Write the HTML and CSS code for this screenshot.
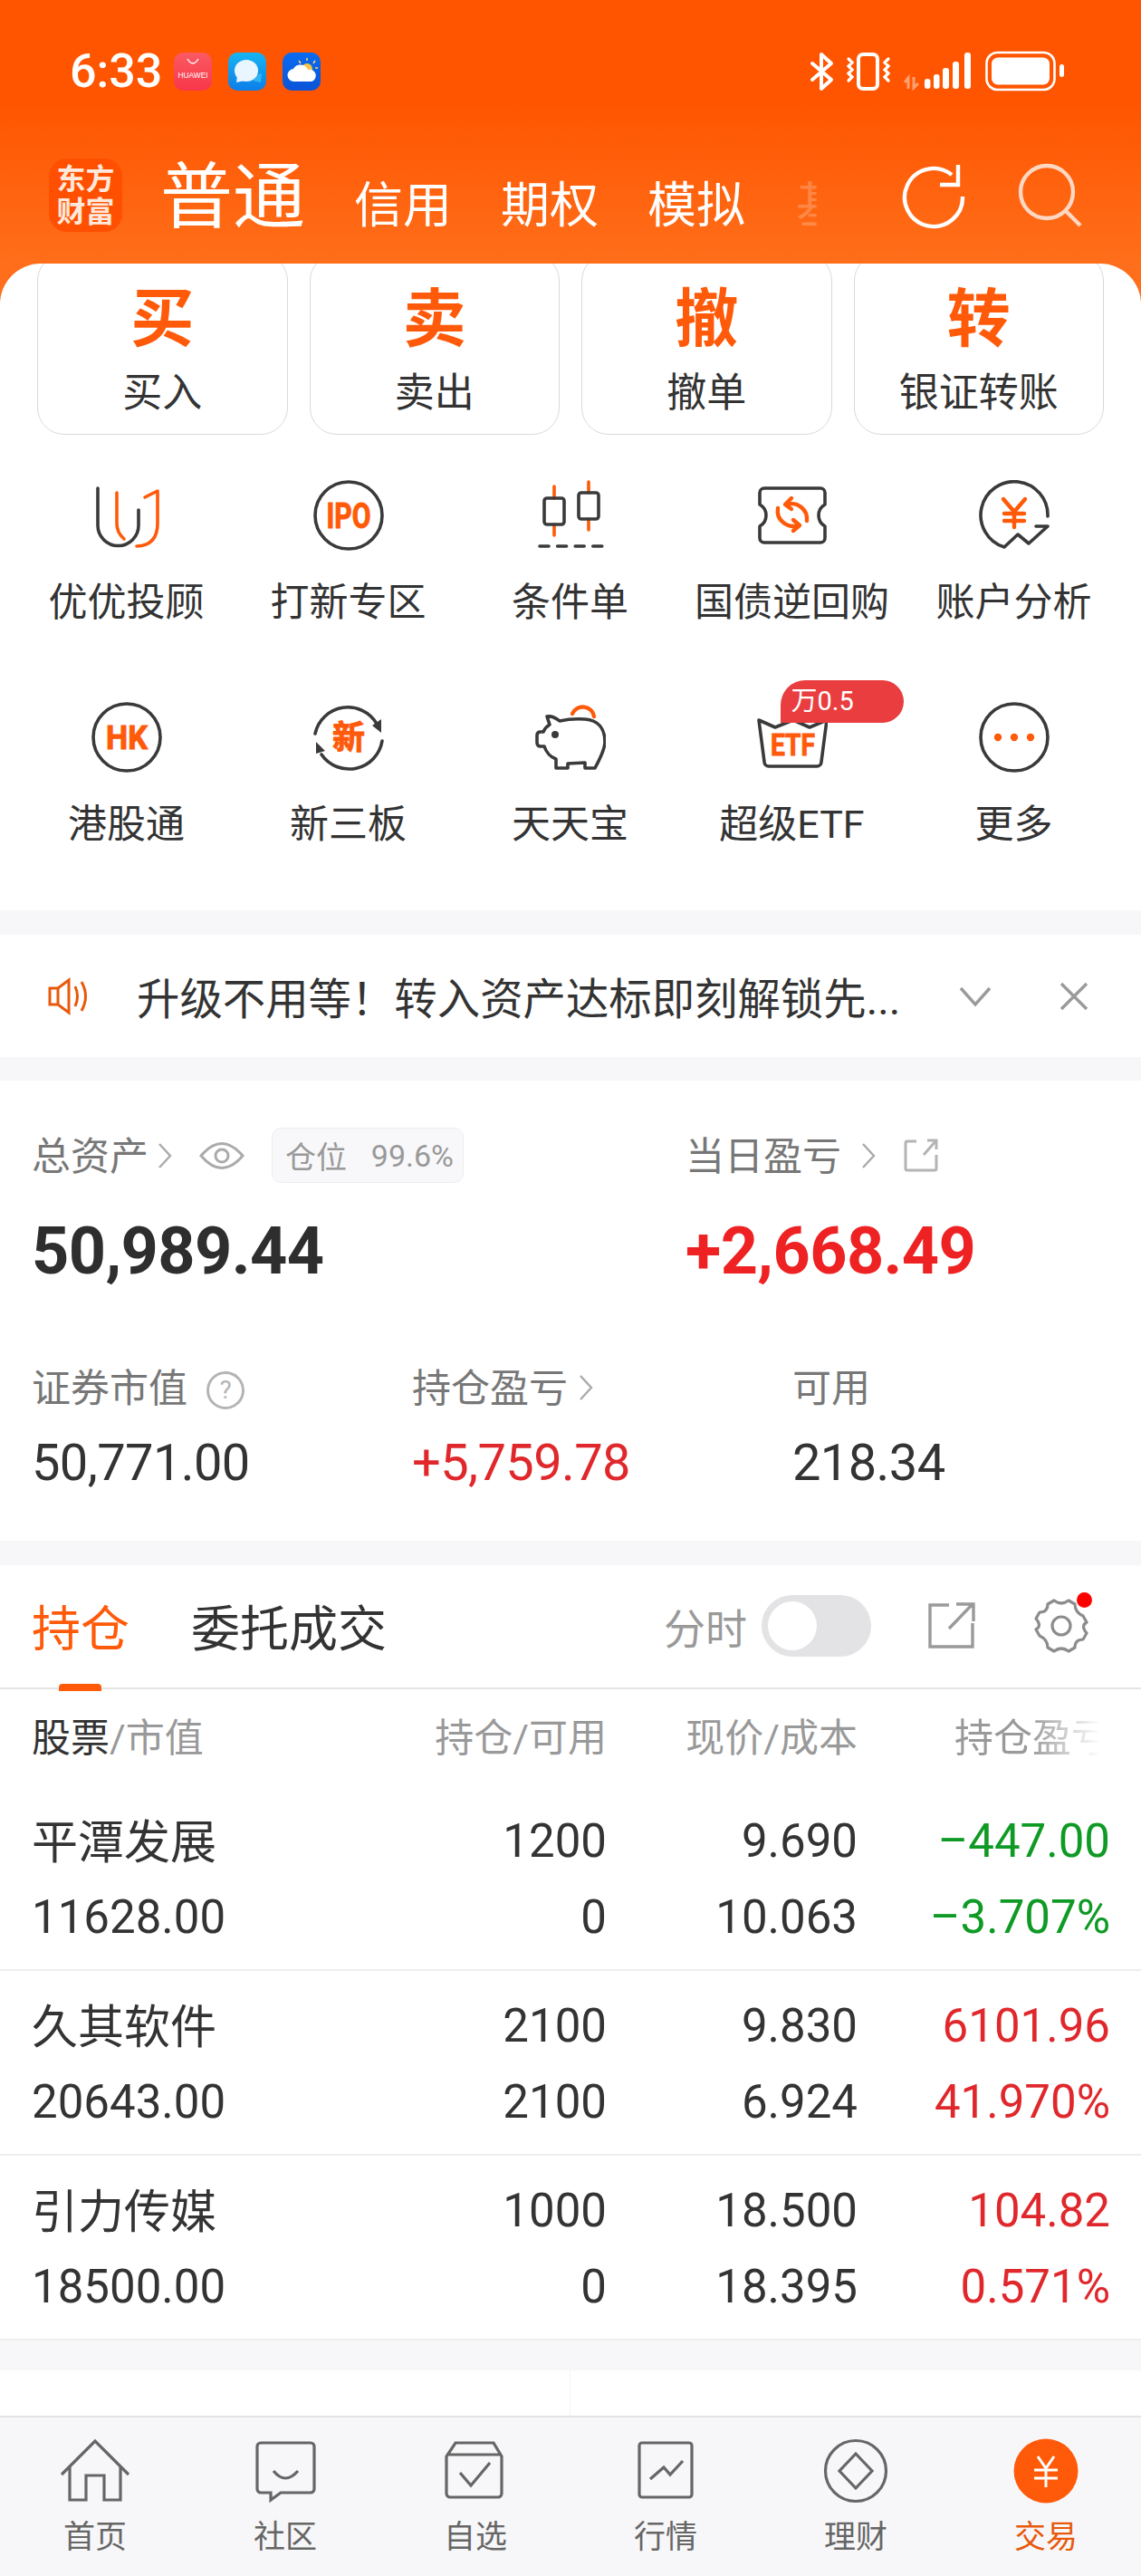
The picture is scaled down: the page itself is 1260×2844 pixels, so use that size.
FILE: index.html
```html
<!DOCTYPE html>
<html lang="zh-CN">
<head>
  <meta charset="UTF-8">
  <meta name="viewport" content="width=device-width, initial-scale=1.0">
  <title>交易</title>
  <link rel="stylesheet" href="styles.css">
</head>
<body>

<!-- Orange header with status bar -->
<header class="header">
  <div class="status-bar">
    <span class="clock">6:33</span>
    <div class="app-icon app-huawei">
      <svg width="42" height="42" viewBox="0 0 42 42"><path d="M15 7 Q21 17 27 7" fill="none" stroke="#fff" stroke-width="1.4"/><text x="21" y="28" text-anchor="middle" class="huawei-text" textLength="33" lengthAdjust="spacingAndGlyphs">HUAWEI</text></svg>
    </div>
    <div class="app-icon app-msg">
      <svg width="42" height="42" viewBox="0 0 42 42"><path d="M30 25 L37 23 L36 33 L27 31Z" fill="#2fb4f0"/><ellipse cx="20" cy="20" rx="13" ry="12" fill="#e9f6ff"/><path d="M10 26 L9 33 L18 31Z" fill="#e9f6ff"/></svg>
    </div>
    <div class="app-icon app-weather">
      <svg width="42" height="42" viewBox="0 0 42 42"><path d="M27 6 V9 M18 9 L20 12 M36 9 L34 12 M39 17 L36 17" stroke="#ffd76a" stroke-width="1.5"/><circle cx="27" cy="18" r="6" fill="#f6c445"/><path d="M13 32 a7 7 0 0 1 -1 -14 a9 9 0 0 1 16 1 a6.5 6.5 0 0 1 4 13Z" fill="#fff"/></svg>
    </div>
    <div class="status-right">
      <svg width="28" height="44" viewBox="0 0 28 44" class="ico-bt"><path d="M3 13 L24 31 L13 41 V3 L24 13 L3 31" fill="none" stroke="#fff" stroke-width="4" stroke-linejoin="round" stroke-linecap="round"/></svg>
      <svg width="50" height="44" viewBox="0 0 50 44"><rect x="14" y="3" width="21" height="38" rx="5" fill="none" stroke="#fff" stroke-width="4"/><path d="M3 8 L7 12 L3 16 L7 20 L3 24 L7 28 L3 32 M47 8 L43 12 L47 16 L43 20 L47 24 L43 28 L47 32" fill="none" stroke="#fff" stroke-width="3.2" stroke-linecap="round"/></svg>
      <svg width="76" height="44" viewBox="0 0 76 44" class="ico-signal">
        <path d="M5 41 V29 L1 34 M11 28 V40 L16 35" fill="none" stroke="#ffa070" stroke-width="3"/>
        <rect x="23" y="30" width="6.5" height="11" rx="3" fill="#fff"/>
        <rect x="33" y="25" width="6.5" height="16" rx="3" fill="#fff"/>
        <rect x="43" y="18" width="7" height="23" rx="3" fill="#fff"/>
        <rect x="54" y="11" width="7" height="30" rx="3" fill="#fff"/>
        <rect x="67" y="1" width="7" height="40" rx="3" fill="#fff"/>
      </svg>
      <svg width="88" height="46" viewBox="0 0 88 46" class="ico-battery">
        <rect x="1.5" y="2" width="75" height="41" rx="12" fill="none" stroke="#fff" stroke-width="2.6"/>
        <rect x="7" y="7.5" width="64" height="30" rx="7" fill="#fff"/>
        <rect x="82" y="15" width="5" height="14" rx="2.5" fill="#fff"/>
      </svg>
    </div>
  </div>

  <nav class="nav">
    <div class="logo"><span>东方</span><span>财富</span></div>
    <span class="nav-main">普通</span>
    <span class="nav-tab">信用</span>
    <span class="nav-tab">期权</span>
    <span class="nav-tab">模拟</span>
    <span class="nav-tab nav-fade">基金</span>
    <svg class="nav-refresh" width="72" height="72" viewBox="0 0 72 72"><path d="M69 36 A32 32 0 1 1 57 12" fill="none" stroke="#fff" stroke-width="4.4"/><path d="M64 1 V23 H44" fill="none" stroke="#fff" stroke-width="4.4"/></svg>
    <svg class="nav-search" width="72" height="72" viewBox="0 0 72 72"><circle cx="32" cy="32" r="29" fill="none" stroke="#ffd8c4" stroke-width="4.4"/><path d="M53 53 L69 69" stroke="#ffd8c4" stroke-width="4.4"/></svg>
  </nav>
</header>

<main class="card">
  <div class="actions">
    <div class="action"><b>买</b><span>买入</span></div>
    <div class="action"><b>卖</b><span>卖出</span></div>
    <div class="action"><b>撤</b><span>撤单</span></div>
    <div class="action"><b>转</b><span>银证转账</span></div>
  </div>

  <div class="shortcuts">
    <div class="shortcut">
      <svg class="ic" width="78" height="78" viewBox="0 0 78 78"><path d="M7 9 V50 a22.5 22.5 0 0 0 45 0 V33" class="dk"/><path d="M28 14 V48 Q28 58 36 65 M50 73 Q73 72 73 48 V12 L59 19" class="or"/></svg>
      <span>优优投顾</span>
    </div>
    <div class="shortcut">
      <svg class="ic" width="78" height="78" viewBox="0 0 78 78"><circle cx="39" cy="39" r="37" class="dk"/><text x="39" y="53" text-anchor="middle" class="ic-text" font-size="38" textLength="49" lengthAdjust="spacingAndGlyphs">IPO</text></svg>
      <span>打新专区</span>
    </div>
    <div class="shortcut">
      <svg class="ic" width="78" height="78" viewBox="0 0 78 78"><path d="M21 7 V20 M21 49 V61 M59 2 V14 M59 43 V55" class="or"/><rect x="10" y="20" width="22" height="29" rx="3" class="dk"/><rect x="48" y="14" width="22" height="29" rx="3" class="dk"/><path d="M5 73 H74" class="dk" stroke-dasharray="10 9.6"/></svg>
      <span>条件单</span>
    </div>
    <div class="shortcut">
      <svg class="ic" width="78" height="78" viewBox="0 0 78 78"><path d="M8 9 H70 a5 5 0 0 1 5 5 V27 Q68 31 68 39 T75 51 V64 a5 5 0 0 1 -5 5 H8 a5 5 0 0 1 -5 -5 V51 Q10 47 10 39 T3 27 V14 a5 5 0 0 1 5 -5Z" class="dk"/><path d="M33 27 A17 17 0 0 1 55 45 M38 20 L31 27 L38 32 M23 31 A17 17 0 0 0 45 50 M40 44 L47 50 L40 56" class="or thick"/></svg>
      <span>国债逆回购</span>
    </div>
    <div class="shortcut">
      <svg class="ic" width="78" height="78" viewBox="0 0 78 78"><path d="M76 40 A37 37 0 1 0 28 74 L43 60 L55 70 L76 51 H63" class="dk"/><path d="M27 21 L39 35 L51 21 M28 37 H50 M28 45 H50 M39 35 V52" class="or thick"/></svg>
      <span>账户分析</span>
    </div>
    <div class="shortcut">
      <svg class="ic" width="78" height="78" viewBox="0 0 78 78"><circle cx="39" cy="39" r="37" class="dk"/><text x="39" y="52" text-anchor="middle" class="ic-text" font-size="37" textLength="46" lengthAdjust="spacingAndGlyphs">HK</text></svg>
      <span>港股通</span>
    </div>
    <div class="shortcut">
      <svg class="ic" width="78" height="78" viewBox="0 0 78 78"><path d="M2 35 A37 37 0 0 1 70 24 M76 43 A37 37 0 0 1 9 58" class="dk"/><path d="M65 26 L75 19 L75 34Z M3 44 L3 57 L13 54Z" fill="#3a3a3a"/><text x="39" y="52" text-anchor="middle" class="ic-text" font-size="36">新</text></svg>
      <span>新三板</span>
    </div>
    <div class="shortcut">
      <svg class="ic" width="78" height="78" viewBox="0 0 78 78"><path d="M41 13 A12.5 12 0 0 1 65 16" class="or thick"/><path d="M13 16 Q20 15 27 21 Q40 18 55 19 C70 20 77 30 77 44 C77 52 72 62 66 73 H55 V67 L36 68 V73 H23 V63 C17 61 12 55 10 49 H6 Q2 49 2 45 V37 Q2 33 6 33 H9 Q11 28 16 25Z" class="dk"/><circle cx="22" cy="36" r="4" fill="#3a3a3a"/></svg>
      <span>天天宝</span>
    </div>
    <div class="shortcut">
      <div class="etf">
        <svg class="ic" width="78" height="78" viewBox="0 0 78 78"><path d="M2 20 L20 28 L40 20 L58 28 L77 20 L71 66 a5 5 0 0 1 -5 5 H13 a5 5 0 0 1 -5 -5Z" class="dk"/><text x="39.5" y="59" text-anchor="middle" class="ic-text" font-size="34" textLength="49" lengthAdjust="spacingAndGlyphs">ETF</text></svg>
        <span class="etf-badge">万0.5</span>
      </div>
      <span>超级ETF</span>
    </div>
    <div class="shortcut">
      <svg class="ic" width="78" height="78" viewBox="0 0 78 78"><circle cx="39" cy="39" r="37" class="dk"/><circle cx="21" cy="39" r="4.2" fill="#ff5a0a"/><circle cx="39" cy="39" r="4.2" fill="#ff5a0a"/><circle cx="57" cy="39" r="4.2" fill="#ff5a0a"/></svg>
      <span>更多</span>
    </div>
  </div>
</main>

<!-- Notice bar -->
<section class="notice">
  <svg class="notice-speaker" width="46" height="42" viewBox="0 0 46 42"><path d="M2 12 H11 L23 3 V39 L11 30 H2Z M11 12 V30 M30 10 Q35 21 30 32 M37 5 Q46 21 37 37" fill="none" stroke="#e8590c" stroke-width="3"/></svg>
  <span class="notice-text">升级不用等！转入资产达标即刻解锁先...</span>
  <svg class="notice-down" width="36" height="26" viewBox="0 0 36 26"><path d="M2 4 L18 22 L34 4" fill="none" stroke="#9a9a9a" stroke-width="3.4"/></svg>
  <svg class="notice-close" width="32" height="32" viewBox="0 0 32 32"><path d="M2 2 L30 30 M30 2 L2 30" fill="none" stroke="#9a9a9a" stroke-width="3.4"/></svg>
</section>

<!-- Assets -->
<section class="assets">
  <div class="assets-top">
    <div>
      <div class="label-row">
        <span class="label">总资产</span>
        <svg width="16" height="30" viewBox="0 0 16 30" class="chev"><path d="M2 2 L14 15 L2 28" fill="none" stroke="#aaa" stroke-width="2.4"/></svg>
        <svg width="50" height="34" viewBox="0 0 50 34" class="eye"><path d="M2 17 Q25 -10 48 17 Q25 44 2 17Z" fill="none" stroke="#aaa" stroke-width="3"/><circle cx="25" cy="17" r="7" fill="none" stroke="#aaa" stroke-width="3"/></svg>
        <span class="pill"><span>仓位</span><span>99.6%</span></span>
      </div>
      <div class="big-num">50,989.44</div>
    </div>
    <div>
      <div class="label-row">
        <span class="label">当日盈亏</span>
        <svg width="16" height="30" viewBox="0 0 16 30" class="chev-wide"><path d="M2 2 L14 15 L2 28" fill="none" stroke="#aaa" stroke-width="2.4"/></svg>
        <svg width="38" height="38" viewBox="0 0 38 38" class="share-small"><path d="M14 3 H4 a2 2 0 0 0 -2 2 V33 a2 2 0 0 0 2 2 H34 a2 2 0 0 0 2 -2 V18 M22 18 L36 2 M26 2 H36 V12" fill="none" stroke="#b4b4b4" stroke-width="3"/></svg>
      </div>
      <div class="big-num red">+2,668.49</div>
    </div>
  </div>
  <div class="assets-bottom">
    <div>
      <div class="label-row">
        <span class="label">证券市值</span>
        <svg width="44" height="44" viewBox="0 0 44 44" class="help"><circle cx="22" cy="22" r="19.5" fill="none" stroke="#b4b4b4" stroke-width="3"/><text x="22" y="31" text-anchor="middle" class="help-text">?</text></svg>
      </div>
      <div class="mid-num">50,771.00</div>
    </div>
    <div>
      <div class="label-row">
        <span class="label">持仓盈亏</span>
        <svg width="16" height="30" viewBox="0 0 16 30" class="chev-mid"><path d="M2 2 L14 15 L2 28" fill="none" stroke="#aaa" stroke-width="2.4"/></svg>
      </div>
      <div class="mid-num red-soft">+5,759.78</div>
    </div>
    <div>
      <div class="label-row"><span class="label">可用</span></div>
      <div class="mid-num">218.34</div>
    </div>
  </div>
</section>

<!-- Positions -->
<section class="positions">
  <div class="pos-tabs">
    <span class="pos-tab active">持仓</span>
    <span class="pos-tab">委托成交</span>
    <span class="pos-spacer"></span>
    <span class="time-label">分时</span>
    <span class="toggle"><span class="knob"></span></span>
    <svg class="pos-share" width="54" height="54" viewBox="0 0 54 54"><path d="M24 4 H3 V50 H50 V24 M24 30 L50 3 M32 3 H51 V22" fill="none" stroke="#9a9a9a" stroke-width="3.4"/></svg>
    <div class="gear">
      <svg width="64" height="64" viewBox="0 0 64 64"><path d="M24 4 Q32 10 40 4 L47 8 Q47 17 56 21 L60 28 Q53 32 60 40 L56 47 Q47 47 47 56 L40 60 Q32 54 24 60 L17 56 Q17 47 8 43 L4 36 Q11 32 4 24 L8 17 Q17 17 17 8Z" fill="none" stroke="#8c8c8c" stroke-width="3.2" stroke-linejoin="round"/><circle cx="32" cy="32" r="10" fill="none" stroke="#8c8c8c" stroke-width="3.2"/></svg>
      <span class="gear-dot"></span>
    </div>
  </div>

  <div class="stock-row stock-head">
    <span class="cell-left"><span class="dark">股票</span>/市值</span>
    <span>持仓/可用</span>
    <span>现价/成本</span>
    <span class="head-fade">持仓盈亏</span>
  </div>

  <div class="stock-row">
    <span class="cell-left stock-name">平潭发展</span><span>1200</span><span>9.690</span><span class="down">–447.00</span>
    <span class="cell-left">11628.00</span><span>0</span><span>10.063</span><span class="down">–3.707%</span>
  </div>
  <div class="stock-row">
    <span class="cell-left stock-name">久其软件</span><span>2100</span><span>9.830</span><span class="up">6101.96</span>
    <span class="cell-left">20643.00</span><span>2100</span><span>6.924</span><span class="up">41.970%</span>
  </div>
  <div class="stock-row">
    <span class="cell-left stock-name">引力传媒</span><span>1000</span><span>18.500</span><span class="up">104.82</span>
    <span class="cell-left">18500.00</span><span>0</span><span>18.395</span><span class="up">0.571%</span>
  </div>
</section>

<div class="below">
  <div class="below-cell"></div>
  <div class="below-cell"></div>
</div>

<!-- Bottom tab bar -->
<footer class="tabbar">
  <div class="tab">
    <svg width="84" height="72" viewBox="0 0 84 72" class="tb"><path d="M5 40 L42 3 L79 40 M14 32 V68 H32 V41 H52 V68 H70 V32"/></svg>
    <span>首页</span>
  </div>
  <div class="tab">
    <svg width="84" height="72" viewBox="0 0 84 72" class="tb"><path d="M15 5 H70 a4 4 0 0 1 4 4 V56 a4 4 0 0 1 -4 4 H37 L26 68 V60 H15 a4 4 0 0 1 -4 -4 V9 a4 4 0 0 1 4 -4Z M29 36 Q42 52 56 36"/></svg>
    <span>社区</span>
  </div>
  <div class="tab">
    <svg width="84" height="72" viewBox="0 0 84 72" class="tb"><path d="M20 5 H62 L71 20 V61 a4 4 0 0 1 -4 4 H14 a4 4 0 0 1 -4 -4 V20Z M10 18 H71 M25 38 L37 52 L58 27"/></svg>
    <span>自选</span>
  </div>
  <div class="tab">
    <svg width="84" height="72" viewBox="0 0 84 72" class="tb"><rect x="13" y="5" width="58" height="60" rx="3"/><path d="M25 45 L40 32 L47 40 L61 25"/></svg>
    <span>行情</span>
  </div>
  <div class="tab">
    <svg width="84" height="72" viewBox="0 0 84 72" class="tb"><circle cx="42" cy="36" r="33.5"/><path d="M42 17 L60 36 L42 55 L24 36Z"/></svg>
    <span>理财</span>
  </div>
  <div class="tab tab-active">
    <svg width="84" height="72" viewBox="0 0 84 72"><circle cx="42" cy="36" r="35.5" fill="#ff5a0a"/><path d="M33 20 L42 33 L51 20 M29 35 H55 M29 44 H55 M42 33 V54" fill="none" stroke="#fff" stroke-width="3"/></svg>
    <span>交易</span>
  </div>
</footer>

</body>
</html>
```

FILE: styles.css
```css
* {
  box-sizing: border-box;
}

body {
  margin: 0;
  width: 1260px;
  height: 2844px;
  overflow: hidden;
  display: flex;
  flex-direction: column;
  background-color: #f7f7f9;
  color: #333;
  font-family: Roboto, "Noto Sans CJK SC", sans-serif;
}

/* header */
.header {
  height: 340px;
  padding-top: 56px;
  background: linear-gradient(to bottom, #ff5500 0%, #ff5500 33%, #ff6e1a 85%, #ff6e1a 100%);
  color: #fff;
}

.status-bar {
  display: flex;
  align-items: center;
  height: 46px;
  padding: 0 84px 0 77px;
}

.clock {
  font-size: 52px;
  font-weight: 500;
  line-height: 46px;
  width: 115px;
}

.app-icon {
  width: 42px;
  height: 42px;
  border-radius: 10px;
  margin-right: 18px;
  overflow: hidden;
}

.app-icon svg {
  display: block;
}

.app-huawei {
  background: linear-gradient(#fb5a63, #f8364a);
}

.app-msg {
  background: linear-gradient(#16b4f2, #0c7ee8);
}

.app-weather {
  background: linear-gradient(#0a6bf0, #0a54d8);
}

.huawei-text {
  font-size: 9px;
  fill: #fff;
  font-family: "Liberation Sans", sans-serif;
}

.status-right {
  margin-left: auto;
  display: flex;
  align-items: center;
  gap: 12px;
}

.ico-signal {
  margin-left: 2px;
}

.ico-battery {
  margin-left: 2px;
}

.nav {
  display: flex;
  align-items: flex-end;
  height: 84px;
  margin-top: 70px;
  padding-left: 54px;
  position: relative;
}

.logo {
  width: 81px;
  height: 81px;
  border-radius: 20px;
  background-color: #ff4f00;
  margin-right: 42px;
  display: flex;
  flex-direction: column;
  align-items: center;
  justify-content: center;
  font-size: 32px;
  font-weight: 700;
  line-height: 36px;
  color: #ffe9dc;
}

.nav-main {
  font-size: 80px;
  line-height: 76px;
  margin-right: 54px;
}

.nav-tab {
  font-size: 54px;
  line-height: 56px;
  margin-right: 54px;
}

.nav-fade {
  margin-right: 0;
  margin-left: 2px;
  white-space: nowrap;
  opacity: 0.22;
  -webkit-mask-image: linear-gradient(to right, #000 20%, transparent 22%);
  mask-image: linear-gradient(to right, #000 20%, transparent 22%);
}

.nav-refresh {
  position: absolute;
  left: 994px;
  top: 9px;
}

.nav-search {
  position: absolute;
  left: 1124px;
  top: 8px;
}

/* card */
.card {
  margin-top: -49px;
  background-color: #fff;
  border-radius: 45px 45px 0 0;
  overflow: hidden;
  height: 714px;
  flex-shrink: 0;
}

.actions {
  display: grid;
  grid-template-columns: repeat(4, 1fr);
  gap: 24px;
  padding: 0 41px;
  margin-top: -11px;
}

.action {
  height: 200px;
  border: 1px solid #d9d9d9;
  border-radius: 30px;
  display: flex;
  flex-direction: column;
  align-items: center;
}

.action b {
  font-size: 70px;
  line-height: 80px;
  margin-top: 32px;
  color: #ff5a0a;
}

.action span {
  font-size: 44px;
  line-height: 56px;
  margin-top: 13px;
}

.shortcuts {
  display: grid;
  grid-template-columns: repeat(5, 245px);
  row-gap: 82px;
  padding: 50px 17px 0;
}

.shortcut {
  display: flex;
  flex-direction: column;
  align-items: center;
  font-size: 43px;
  line-height: 56px;
}

.shortcut > span {
  margin-top: 29px;
}

.ic {
  display: block;
}

.dk,
.or {
  fill: none;
  stroke-width: 3.6;
  stroke-linecap: round;
  stroke-linejoin: round;
}

.dk {
  stroke: #3a3a3a;
}

.or {
  stroke: #ff5a0a;
}

.or.thick {
  stroke-width: 4.4;
}

.ic-text {
  fill: #ff5a0a;
  stroke: #ff5a0a;
  stroke-width: 1;
  font-weight: 700;
}

.etf {
  position: relative;
  width: 78px;
  height: 78px;
}

.etf-badge {
  position: absolute;
  left: 26px;
  top: -24px;
  width: 136px;
  height: 47px;
  padding-left: 12px;
  border-radius: 28px 24px 24px 0;
  background-color: #e93d3f;
  color: #fff;
  font-size: 29px;
  line-height: 47px;
}

/* notice */
.notice {
  display: flex;
  align-items: center;
  height: 135px;
  margin-top: 27px;
  padding-left: 53px;
  background-color: #fff;
  flex-shrink: 0;
}

.notice-text {
  font-size: 47.4px;
  margin-left: 52px;
  width: 849px;
  white-space: nowrap;
}

.notice-down {
  margin-left: 59px;
}

.notice-close {
  margin-left: 75px;
}

/* assets */
.assets {
  height: 508px;
  margin-top: 26px;
  padding: 52px 0 0 35px;
  background-color: #fff;
  flex-shrink: 0;
}

.assets-top {
  display: grid;
  grid-template-columns: 722px 1fr;
}

.assets-bottom {
  display: grid;
  grid-template-columns: 420px 420px 1fr;
  margin-top: 83px;
}

.label-row {
  display: flex;
  align-items: center;
  height: 61px;
  font-size: 43px;
  color: #777;
}

.assets-bottom .label-row {
  height: 50px;
}

.label {
  margin-bottom: 6px;
}

.chev {
  margin-left: 10px;
}

.chev-wide {
  margin-left: 22px;
}

.chev-mid {
  margin-left: 12px;
}

.eye {
  margin-left: 30px;
}

.share-small {
  margin-left: 31px;
}

.help {
  margin-left: 20px;
  margin-top: 6px;
}

.help-text {
  font-size: 28px;
  fill: #b4b4b4;
}

.pill {
  display: flex;
  justify-content: space-between;
  align-items: center;
  width: 212px;
  height: 61px;
  margin-left: 30px;
  padding: 0 10px 0 14px;
  border: 1px solid #eee;
  border-radius: 10px;
  background-color: #f8f8fa;
  color: #999;
  font-size: 34px;
}

.big-num {
  font-size: 72px;
  font-weight: 700;
  line-height: 84px;
  margin-top: 34px;
  letter-spacing: -0.6px;
  color: #2e2e2e;
}

.mid-num {
  font-size: 56px;
  line-height: 70px;
  margin-top: 23px;
  letter-spacing: -0.6px;
  color: #333;
}

.big-num.red {
  color: #ee2222;
}

.mid-num.red-soft {
  color: #e0282c;
}

/* positions */
.positions {
  margin-top: 27px;
  background-color: #fff;
  flex-shrink: 0;
}

.pos-tabs {
  display: flex;
  align-items: center;
  height: 137px;
  padding: 0 56px 2px 35px;
  border-bottom: 2px solid #e5e5e5;
}

.pos-tab {
  font-size: 54px;
  margin-right: 68px;
  position: relative;
}

.pos-tab.active {
  color: #ff5a0a;
}

.pos-tab.active::after {
  content: "";
  position: absolute;
  left: 30px;
  bottom: -33px;
  width: 47px;
  height: 8px;
  border-radius: 4px 4px 0 0;
  background-color: #ff5a0a;
}

.pos-spacer {
  flex: 1;
}

.time-label {
  font-size: 46px;
  color: #999;
}

.toggle {
  width: 121px;
  height: 68px;
  margin-left: 16px;
  padding: 7px;
  border-radius: 34px;
  background-color: #e3e3e5;
}

.knob {
  display: block;
  width: 54px;
  height: 54px;
  border-radius: 50%;
  background-color: #fff;
}

.pos-share {
  margin-left: 62px;
}

.gear {
  position: relative;
  width: 64px;
  height: 64px;
  margin-left: 62px;
}

.gear-dot {
  position: absolute;
  right: -2px;
  top: -5px;
  width: 17px;
  height: 17px;
  border-radius: 50%;
  background-color: #f00;
}

.stock-row {
  display: grid;
  grid-template-columns: 301px 334px 277px 279px;
  grid-auto-rows: 84px;
  height: 204px;
  padding: 18px 0 0 35px;
  align-items: center;
  font-size: 51px;
  text-align: right;
  border-bottom: 2px solid #eee;
}

.stock-head {
  height: 107px;
  padding-top: 8px;
  border-bottom: 0;
  font-size: 43px;
  color: #999;
}

.cell-left {
  text-align: left;
}

.stock-name {
  margin-bottom: 4px;
}

.dark {
  color: #333;
}

.head-fade {
  -webkit-mask-image: linear-gradient(to right, #000 68%, transparent 96%);
  mask-image: linear-gradient(to right, #000 68%, transparent 96%);
}

.up {
  color: #e0282c;
}

.down {
  color: #0f9a25;
}

.below {
  display: grid;
  grid-template-columns: 630px 1fr;
  height: 50px;
  margin-top: 33px;
  background-color: #fff;
  flex-shrink: 0;
}

.below-cell:first-child {
  border-right: 1px solid #f2f2f2;
}

/* tab bar */
.tabbar {
  display: grid;
  grid-template-columns: repeat(6, 210px);
  flex: 1;
  border-top: 2px solid #e2e2e2;
  background-color: #f7f7f9;
}

.tab {
  display: flex;
  flex-direction: column;
  align-items: center;
  padding-top: 23px;
  font-size: 35px;
  line-height: 44px;
  color: #666;
}

.tab svg {
  display: block;
  margin-bottom: 16px;
}

.tb,
.tb * {
  fill: none;
  stroke: #666;
  stroke-width: 3.2;
}

.tab-active {
  color: #e8590c;
}
```
